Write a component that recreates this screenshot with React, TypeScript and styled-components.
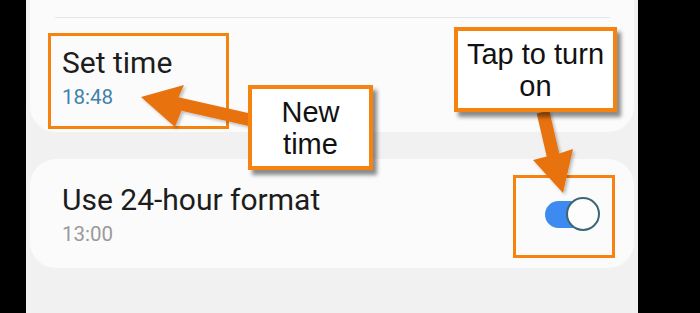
import React from 'react';
import styled, { createGlobalStyle } from 'styled-components';

const GlobalStyle = createGlobalStyle`
	html, body {
		margin: 0;
		padding: 0;
		background: #000;
	}
`;

const ORANGE = '#f6820f';
const ARROW = '#e8720c';

const App: React.FC = () => (
	<>
		<GlobalStyle />
		<Stage>
			<Edge $width={26} />
			<Screen>
				<Card $top={false}>
					<PrevRowTail />
					<SettingRow>
						<Texts>
							<Title>{'Set time'}</Title>
							<Value $accent>{'18:48'}</Value>
						</Texts>
					</SettingRow>
				</Card>
				<Card $top>
					<SettingRow $withToggle>
						<Texts>
							<Title>{'Use 24-hour format'}</Title>
							<Value>{'13:00'}</Value>
						</Texts>
						<Toggle>
							<Knob />
						</Toggle>
					</SettingRow>
				</Card>

				<Frame $left={22} $top={33} $w={181} $h={96} />
				<Frame $left={487} $top={175} $w={102} $h={83} />

				<Arrows viewBox="26 0 612 313">
					<defs>
						<filter id="arrowShadow" x="-20%" y="-20%" width="140%" height="140%">
							<feDropShadow dx="2" dy="2" stdDeviation="1.5" floodColor="#000" floodOpacity="0.25" />
						</filter>
					</defs>
					<polygon
						filter="url(#arrowShadow)"
						fill={ARROW}
						points="141,97 184,85 178.5,97.2 253.5,114.2 256.5,127.8 181.5,110.8 175,127"
					/>
					<polygon
						filter="url(#arrowShadow)"
						fill={ARROW}
						points="536.7,113.5 549.3,110.5 559.3,153.5 573,149 563,193 533,160 546.7,156.5"
					/>
				</Arrows>

				<Callout $left={222} $top={85} $w={125} $h={85}>
					{'New'}<br />{'time'}
				</Callout>
				<Callout $left={428} $top={27} $w={163} $h={85}>
					{'Tap to turn'}<br />{'on'}
				</Callout>
			</Screen>
			<Edge $width={62} />
		</Stage>
	</>
);

const Stage = styled.div`
	display: flex;
	width: 700px;
	height: 313px;
	overflow: hidden;
	background: #000;
`;

const Edge = styled.div<{ $width: number }>`
	flex: 0 0 ${p => p.$width}px;
	background: #000;
`;

const Screen = styled.div`
	position: relative;
	flex: 0 0 612px;
	display: flex;
	flex-direction: column;
	padding: 0 4px;
	box-sizing: border-box;
	background: #f1f1f1;
	font-family: Roboto, 'Noto Sans', sans-serif;
`;

const Card = styled.div<{ $top: boolean }>`
	background: #fbfbfb;
	border-radius: ${p => p.$top ? '26px' : '0 0 26px 26px'};
	margin-top: ${p => p.$top ? '27px' : '0'};
	height: ${p => p.$top ? '109px' : '132px'};
	box-sizing: border-box;
`;

const PrevRowTail = styled.div`
	height: 17px;
	margin: 0 24px 0 25px;
	border-bottom: 1px solid #e6e6e6;
`;

const SettingRow = styled.div<{ $withToggle?: boolean }>`
	display: flex;
	align-items: center;
	justify-content: space-between;
	height: ${p => p.$withToggle ? '100%' : 'auto'};
	padding: ${p => p.$withToggle ? '0 35px 0 32px' : '27px 35px 0 32px'};
	box-sizing: border-box;
`;

const Texts = styled.div`
	display: flex;
	flex-direction: column;
	gap: 5px;
`;

const Title = styled.div`
	font-size: 30px;
	line-height: 35px;
	color: #1d1d1d;
`;

const Value = styled.div<{ $accent?: boolean }>`
	font-size: 20.5px;
	line-height: 24px;
	color: ${p => p.$accent ? '#3f82ab' : '#9a9a9a'};
`;

const Toggle = styled.div`
	position: relative;
	width: 54px;
	height: 27px;
	margin-top: 1px;
	border-radius: 14px;
	background: #3d8af0;
`;

const Knob = styled.div`
	position: absolute;
	right: -1px;
	top: 50%;
	width: 30px;
	height: 30px;
	transform: translateY(-50%);
	border-radius: 50%;
	background: #fdfdfd;
	border: 2px solid #3b6777;
`;

const Frame = styled.div<{ $left: number; $top: number; $w: number; $h: number }>`
	position: absolute;
	left: ${p => p.$left}px;
	top: ${p => p.$top}px;
	width: ${p => p.$w}px;
	height: ${p => p.$h}px;
	box-sizing: border-box;
	border: 3px solid ${ORANGE};
`;

const Arrows = styled.svg`
	position: absolute;
	left: 0;
	top: 0;
	width: 612px;
	height: 313px;
	pointer-events: none;
`;

const Callout = styled.div<{ $left: number; $top: number; $w: number; $h: number }>`
	position: absolute;
	left: ${p => p.$left}px;
	top: ${p => p.$top}px;
	width: ${p => p.$w}px;
	height: ${p => p.$h}px;
	box-sizing: border-box;
	display: flex;
	align-items: center;
	justify-content: center;
	text-align: center;
	background: #fff;
	border: 4px solid ${ORANGE};
	box-shadow: 4px 5px 4px rgba(0, 0, 0, 0.45);
	font-family: 'Liberation Sans', Arial, sans-serif;
	font-size: 29px;
	line-height: 32px;
	color: #111;
`;

export default App;
